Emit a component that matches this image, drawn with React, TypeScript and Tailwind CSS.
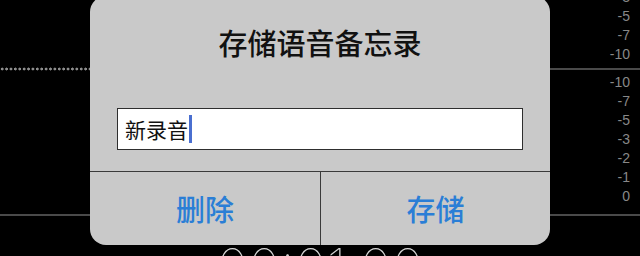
const topScale = ["-3", "-5", "-7", "-10"];
const midScale = ["-10", "-7", "-5", "-3", "-2", "-1", "0"];

export default function App() {
  return (
    <div className="relative h-[256px] w-[640px] overflow-hidden bg-black font-['Liberation_Sans','Noto_Sans_CJK_SC',sans-serif]">
      {/* recorder screen behind the alert */}
      <div className="flex h-full flex-col">
        <div className="flex h-[68px] shrink-0 flex-col items-end justify-end pb-[4px] pr-[10px] text-[14px] leading-[19px] text-[#888]">
          {topScale.map((n) => (
            <span key={n}>{n}</span>
          ))}
        </div>
        <div className="flex h-[2px] shrink-0 items-center">
          <div className="h-[4px] w-[300px] bg-[radial-gradient(circle,#8e8e8e_1.3px,transparent_1.7px)] bg-[length:4.4px_4px]" />
          <div className="h-[2px] flex-1 bg-[#4a4a4a]" />
        </div>
        <div className="flex h-[144px] shrink-0 flex-col items-end pt-[3px] pr-[10px] text-[14px] leading-[19px] text-[#888]">
          {midScale.map((n, i) => (
            <span key={i}>{n}</span>
          ))}
        </div>
        <div className="h-[2px] shrink-0 bg-[#4a4a4a]" />
        <div className="flex flex-1 justify-center pt-[26px]">
          <span className="font-['Inter',sans-serif] text-[54px] font-thin leading-none text-[#d4d4d4]">
            00:01.00
          </span>
        </div>
      </div>

      {/* alert */}
      <div className="absolute left-[90px] top-[-4px] flex h-[249px] w-[460px] flex-col overflow-hidden rounded-[16px] bg-[#c9c9c9] font-['Noto_Sans_CJK_SC',sans-serif]">
        <div className="pt-[30px] text-center text-[29px] font-medium leading-[32px] text-[#111]">
          存储语音备忘录
        </div>
        <div className="mx-[27px] mt-[50px] flex h-[42px] items-center border border-[#2e2e2e] bg-white pl-[7px]">
          <span className="text-[21px] leading-[28px] text-[#111]">新录音</span>
          <span className="ml-[1px] inline-block h-[28px] w-[3px] bg-[#4a6fd0]" />
        </div>
        <div className="mt-[21px] h-px bg-[#3a3a3a]" />
        <div className="grid flex-1 grid-cols-2">
          <div className="flex items-center justify-center text-[29px] font-medium text-[#2a7ed6]">
            删除
          </div>
          <div className="flex items-center justify-center border-l border-[#3a3a3a] text-[29px] font-medium text-[#2a7ed6]">
            存储
          </div>
        </div>
      </div>
    </div>
  );
}
